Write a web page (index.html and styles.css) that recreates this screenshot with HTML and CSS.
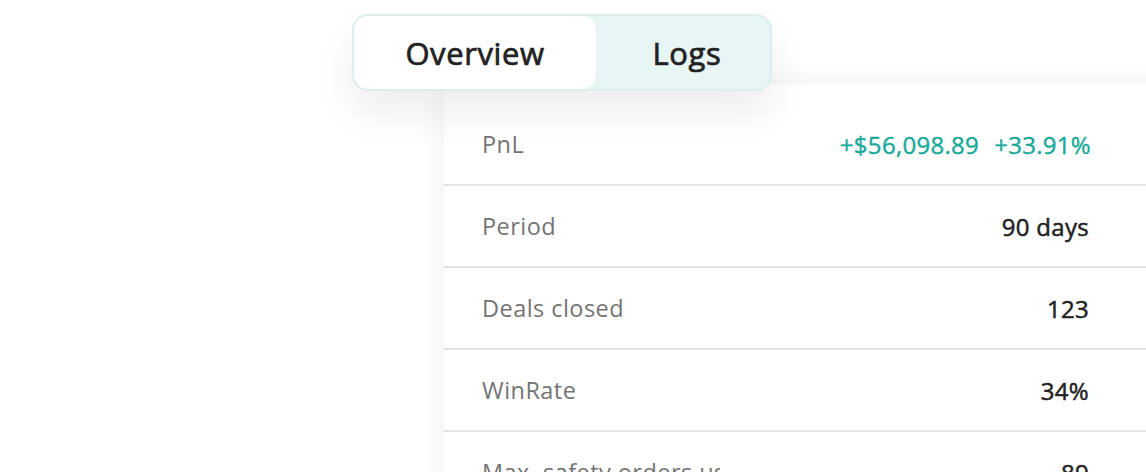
FILE: index.html
```html
<!DOCTYPE html>
<html lang="en">
<head>
    <meta charset="UTF-8">
    <meta name="viewport" content="width=device-width, initial-scale=1.0">
    <title>Bot stats</title>
    <link rel="stylesheet" href="styles.css">
</head>
<body>
    <div class="page">
        <nav class="tabs">
            <button class="tab active">Overview</button>
            <button class="tab">Logs</button>
        </nav>

        <section class="stats">
            <div class="row">
                <span class="label">PnL</span>
                <span class="value green">+$56,098.89<span class="pct">+33.91%</span></span>
            </div>
            <div class="row">
                <span class="label">Period</span>
                <span class="value">90 days</span>
            </div>
            <div class="row">
                <span class="label">Deals closed</span>
                <span class="value">123</span>
            </div>
            <div class="row">
                <span class="label">WinRate</span>
                <span class="value">34%</span>
            </div>
            <div class="row">
                <span class="label">Max. safety orders used</span>
                <span class="value">89</span>
            </div>
        </section>
    </div>
</body>
</html>
```

FILE: styles.css
```css
html, body {
    margin: 0;
    padding: 0;
    height: 100%;
    overflow: hidden;
    background: #ffffff;
    font-family: "Open Sans", "Noto Sans", Arial, sans-serif;
}

.page {
    padding-top: 14px;
}

.tabs {
    position: relative;
    z-index: 2;
    display: flex;
    width: 416px;
    margin-left: 352px;
    background: #e8f5f5;
    border: 2px solid #deeded;
    border-radius: 16px;
    box-shadow: 0 22px 40px rgba(0, 0, 0, 0.07);
}

.tab {
    height: 73px;
    border: none;
    background: transparent;
    font-family: inherit;
    font-size: 31px;
    font-weight: 400;
    -webkit-text-stroke: 0.7px #222222;
    color: #222222;
    letter-spacing: 0.6px;
    cursor: pointer;
    flex: 1;
    padding: 0 0 0 8px;
}

.tab.active {
    flex: 0 0 242px;
    padding: 0;
    background: #ffffff;
    border-radius: 14px;
}

.stats {
    position: relative;
    z-index: 1;
    width: 780px;
    margin-top: -7px;
    margin-left: 444px;
    padding-top: 20px;
    background: #ffffff;
    box-shadow: 0 0 26px rgba(0, 0, 0, 0.07);
}

.row {
    display: flex;
    align-items: center;
    justify-content: space-between;
    height: 80px;
    padding: 0 135px 0 38px;
    border-bottom: 2px solid #e3e3e3;
}

.label {
    max-width: 238px;
    overflow: hidden;
    white-space: nowrap;
    font-size: 23.5px;
    font-weight: 400;
    color: #747474;
    letter-spacing: 0.45px;
}

.value {
    font-size: 24px;
    font-weight: 400;
    -webkit-text-stroke: 0.5px #222222;
    color: #222222;
    letter-spacing: 0.3px;
}

.green {
    color: #1aa99a;
    -webkit-text-stroke: 0.4px #1aa99a;
    margin-right: -2px;
}

.pct {
    margin-left: 15px;
}
```
